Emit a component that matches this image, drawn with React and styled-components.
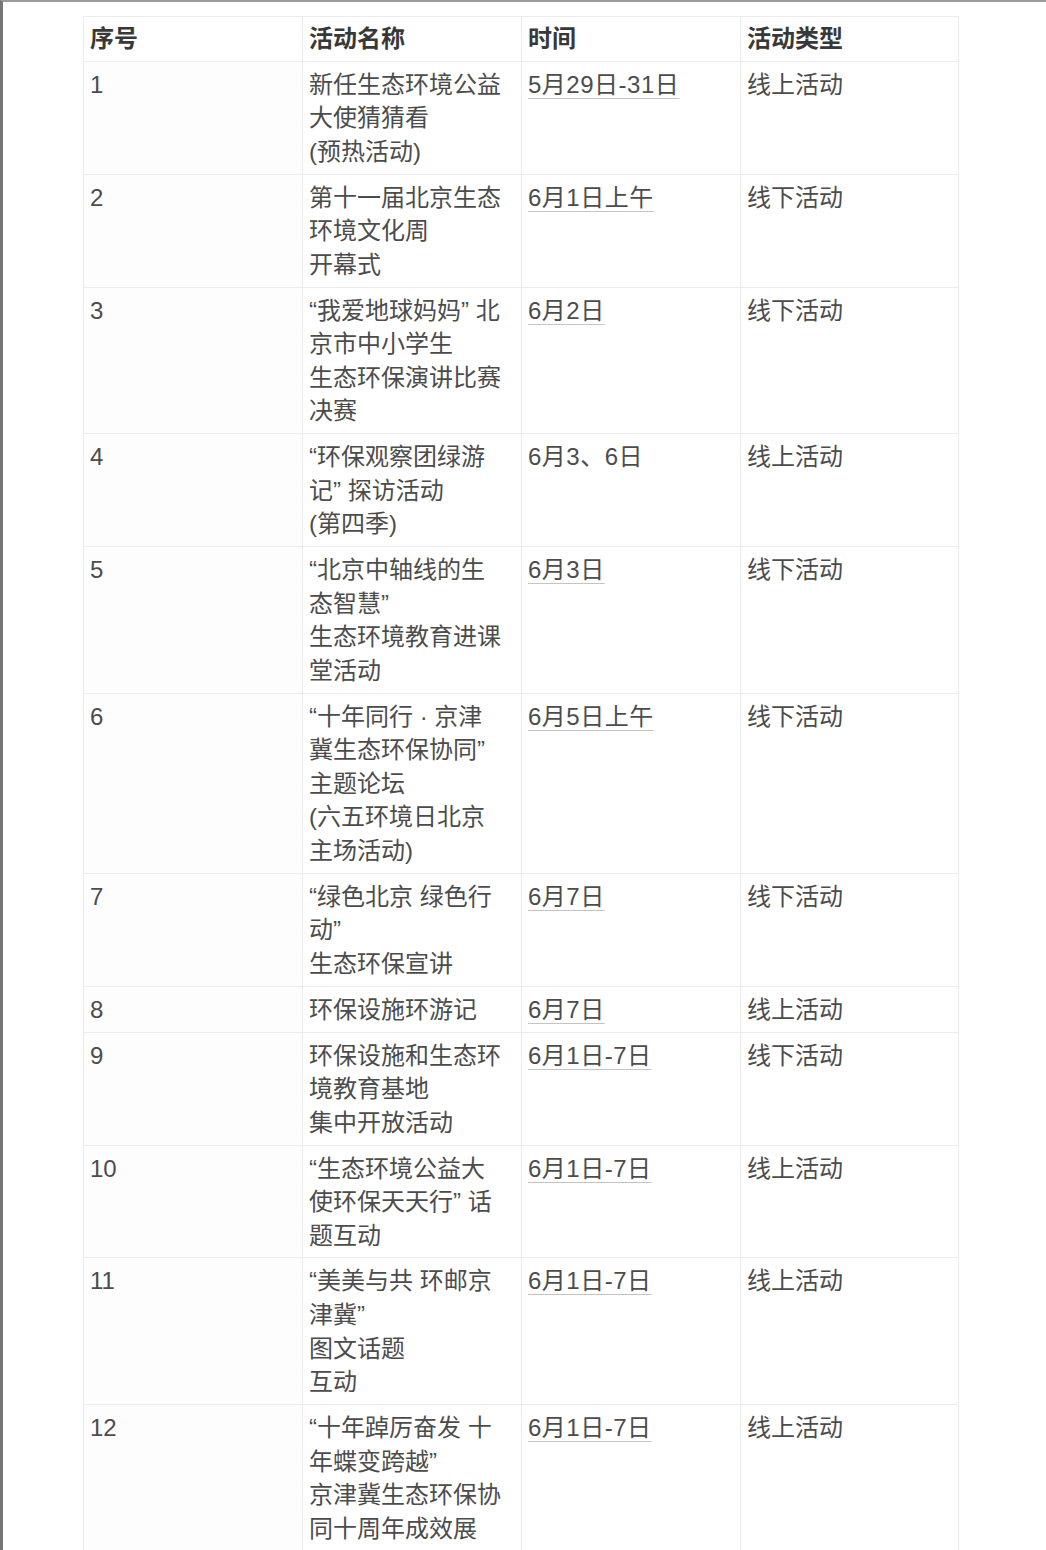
import React from "react";
import styled, { createGlobalStyle } from "styled-components";

const GlobalStyle = createGlobalStyle`
  html, body {
    margin: 0;
    padding: 0;
    background: #ffffff;
  }
  body {
    font-family: "Liberation Sans", "Noto Sans CJK SC", sans-serif;
  }
`;

const rows = [
  { no: "1", name: ["新任生态环境公益", "大使猜猜看", "(预热活动)"], date: "5月29日-31日", link: true, type: "线上活动" },
  { no: "2", name: ["第十一届北京生态", "环境文化周", "开幕式"], date: "6月1日上午", link: true, type: "线下活动" },
  { no: "3", name: ["“我爱地球妈妈” 北", "京市中小学生", "生态环保演讲比赛", "决赛"], date: "6月2日", link: true, type: "线下活动" },
  { no: "4", name: ["“环保观察团绿游", "记” 探访活动", "(第四季)"], date: "6月3、6日", link: false, type: "线上活动" },
  { no: "5", name: ["“北京中轴线的生", "态智慧”", "生态环境教育进课", "堂活动"], date: "6月3日", link: true, type: "线下活动" },
  { no: "6", name: ["“十年同行 · 京津", "冀生态环保协同”", "主题论坛", "(六五环境日北京", "主场活动)"], date: "6月5日上午", link: true, type: "线下活动" },
  { no: "7", name: ["“绿色北京 绿色行", "动”", "生态环保宣讲"], date: "6月7日", link: true, type: "线下活动" },
  { no: "8", name: ["环保设施环游记"], date: "6月7日", link: true, type: "线上活动" },
  { no: "9", name: ["环保设施和生态环", "境教育基地", "集中开放活动"], date: "6月1日-7日", link: true, type: "线下活动" },
  { no: "10", name: ["“生态环境公益大", "使环保天天行” 话", "题互动"], date: "6月1日-7日", link: true, type: "线上活动" },
  { no: "11", name: ["“美美与共 环邮京", "津冀”", "图文话题", "互动"], date: "6月1日-7日", link: true, type: "线上活动" },
  { no: "12", name: ["“十年踔厉奋发 十", "年蝶变跨越”", "京津冀生态环保协", "同十周年成效展"], date: "6月1日-7日", link: true, type: "线上活动" },
];

const Frame = styled.div`
  min-height: 1550px;
  box-sizing: border-box;
  border-top: 2px solid #9a9a9a;
  border-left: 3px solid #767676;
  padding: 14px 0 0 80px;
  overflow: hidden;
`;

const Table = styled.table`
  width: 875px;
  table-layout: fixed;
  border-collapse: collapse;
  color: #4c4c4c;
  font-size: 24px;
  line-height: 33.6px;
`;

const HeadCell = styled.th`
  border: 1px solid #ececec;
  padding: 5px 6px 5px;
  text-align: left;
  vertical-align: top;
  font-weight: 600;
  color: #383838;
  white-space: nowrap;
`;

const Cell = styled.td`
  border: 1px solid #ececec;
  padding: 6px 6px 5.2px;
  vertical-align: top;
  white-space: nowrap;
  background: ${(p) => (p.$tint ? "#fdfdfd" : "#ffffff")};
`;

const Line = styled.div`
  display: block;
`;

const DateText = styled.span`
  letter-spacing: 0.5px;
  text-decoration: ${(p) => (p.$link ? "underline" : "none")};
  text-decoration-color: #c4c4c4;
  text-decoration-thickness: 1px;
  text-underline-offset: 5px;
`;

export default function App() {
  return (
    <>
      <GlobalStyle />
      <Frame>
        <Table>
          <colgroup>
            <col style={{ width: 219 }} />
            <col style={{ width: 219 }} />
            <col style={{ width: 219 }} />
            <col style={{ width: 218 }} />
          </colgroup>
          <thead>
            <tr>
              <HeadCell>序号</HeadCell>
              <HeadCell>活动名称</HeadCell>
              <HeadCell>时间</HeadCell>
              <HeadCell>活动类型</HeadCell>
            </tr>
          </thead>
          <tbody>
            {rows.map((r) => (
              <tr key={r.no}>
                <Cell $tint>{r.no}</Cell>
                <Cell>
                  {r.name.map((l, i) => (
                    <Line key={i}>{l}</Line>
                  ))}
                </Cell>
                <Cell>
                  <DateText $link={r.link}>{r.date}</DateText>
                </Cell>
                <Cell>{r.type}</Cell>
              </tr>
            ))}
          </tbody>
        </Table>
      </Frame>
    </>
  );
}
